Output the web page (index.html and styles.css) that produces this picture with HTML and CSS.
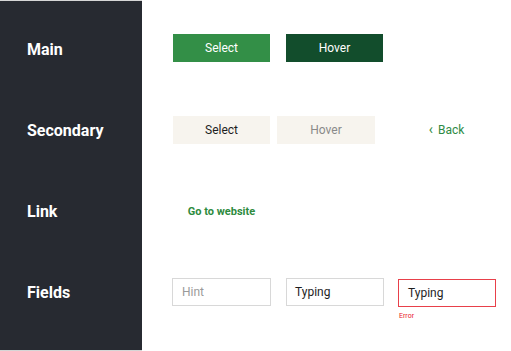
FILE: index.html
```html
<!DOCTYPE html>
<html lang="en">
<head>
  <meta charset="UTF-8">
  <title>Buttons and fields</title>
  <link rel="stylesheet" href="styles.css">
</head>
<body>
  <div class="page">
    <div class="sidebar">
      <div class="label">Main</div>
      <div class="label">Secondary</div>
      <div class="label">Link</div>
      <div class="label">Fields</div>
    </div>
    <div class="content">
      <div class="row">
        <button class="btn main">Select</button>
        <button class="btn main hover">Hover</button>
      </div>
      <div class="row tight">
        <button class="btn secondary">Select</button>
        <button class="btn secondary hover">Hover</button>
        <button class="btn back"><span class="chev">‹</span> Back</button>
      </div>
      <div class="row short">
        <a class="btn link" href="#">Go to website</a>
      </div>
      <div class="row fields">
        <div class="field hint">Hint</div>
        <div class="field">Typing</div>
        <div class="field-wrap">
          <div class="field error">Typing</div>
          <div class="error-msg">Error</div>
        </div>
      </div>
    </div>
  </div>
</body>
</html>
```

FILE: styles.css
```css
body { margin:0; background:#fff; font-family:Roboto,"Liberation Sans",sans-serif; }
.page { display:flex; height:351px; }
.sidebar { width:142px; background:#272a31; padding-top:8px; box-sizing:border-box; border-top:1px solid #d6d6d6; border-bottom:1px solid #d6d6d6; }
.label { height:81px; display:flex; align-items:center; padding-left:27px; color:#fff; font-size:16px; font-weight:700; }
.content { flex:1; padding-top:7px; padding-left:31px; }
.row { height:82px; display:flex; align-items:center; gap:16px; }
.row.short { height:80px; }
.row.tight { gap:7px; }
.btn { width:97px; height:28px; border:0; padding:0; font-family:inherit; font-size:12px; display:flex; align-items:center; justify-content:center; text-decoration:none; cursor:pointer; }
.btn.main { background:#338f47; color:#fff; }
.btn.main.hover { background:#124d2c; }
.btn.secondary { background:#f7f4ee; color:#1e1e1e; }
.btn.secondary.hover { color:#8a8a8a; width:98px; }
.btn.back { background:none; color:#2e8b45; margin-left:16px; font-size:12px; }
.chev { font-size:14px; margin-right:5px; position:relative; top:-1px; }
.btn.link { background:none; color:#2e8b3e; font-size:11px; font-weight:700; }
.fields { gap:14px; }
.field { width:98px; height:28px; box-sizing:border-box; border:1px solid #d8d8d8; font-size:12px; color:#1e1e1e; display:flex; align-items:center; padding-left:8px; }
.field.hint { width:99px; color:#9a9a9a; padding-left:9px; margin-left:-1px; margin-right:1px; }
.field.error { border-color:#e8404a; padding-left:9px; }
.field-wrap { position:relative; margin-top:2px; }
.error-msg { position:absolute; left:1px; top:33px; color:#e8202a; font-size:7px; }
```
